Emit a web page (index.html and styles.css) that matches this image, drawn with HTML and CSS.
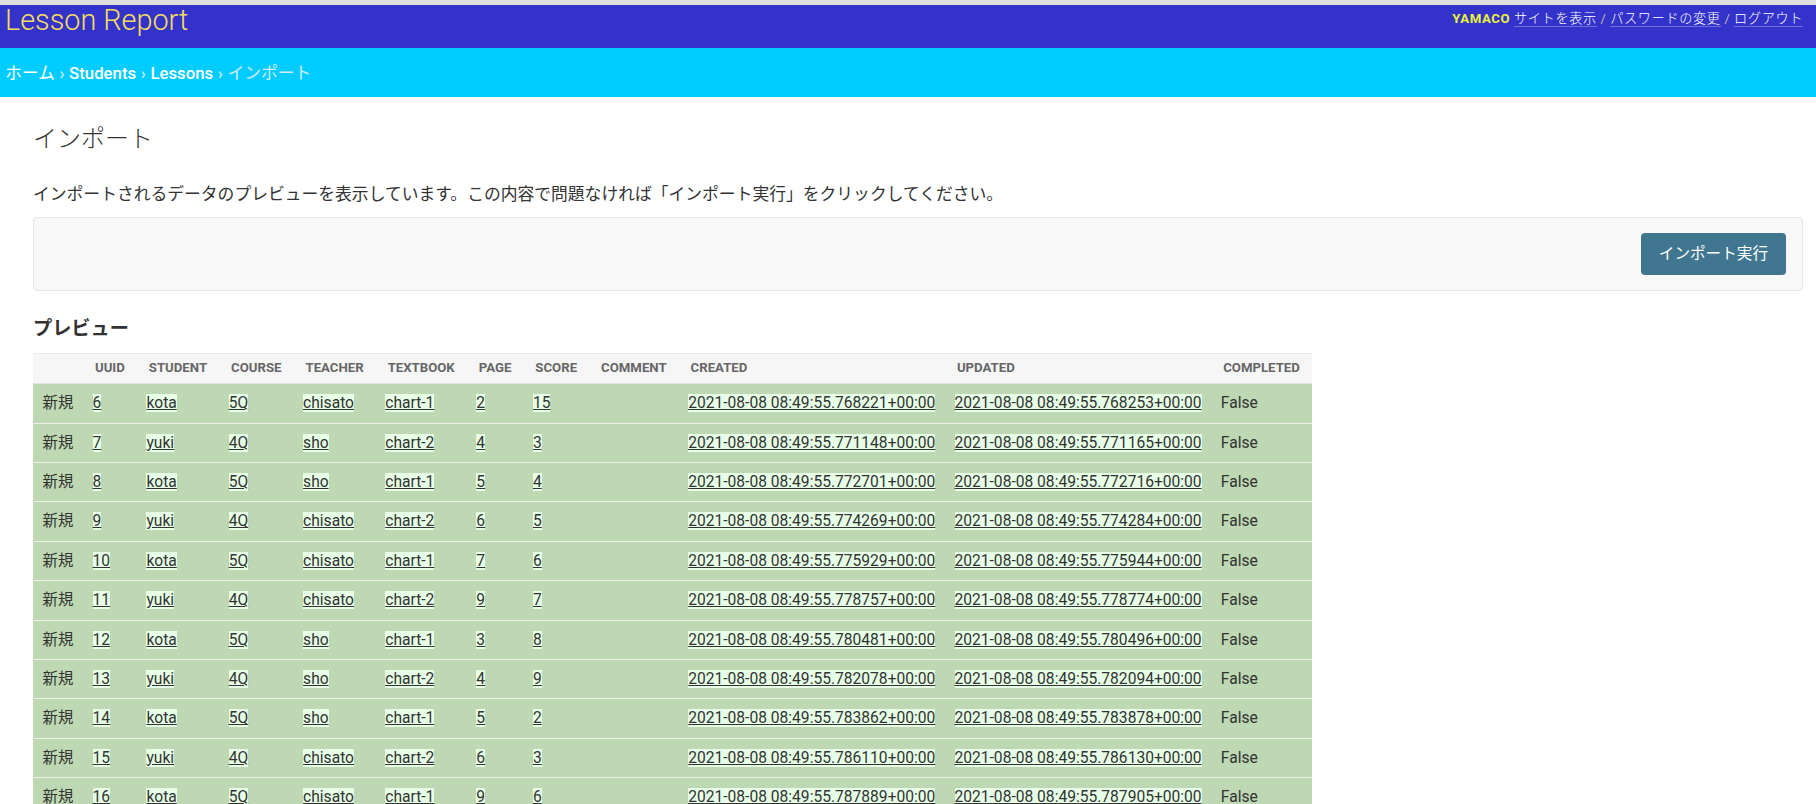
FILE: index.html
```html
<!DOCTYPE html>
<html lang="ja">
<head>
<meta charset="utf-8">
<title>インポート | Lesson Report</title>
<link rel="stylesheet" href="styles.css">
</head>
<body>
<header class="header">
  <div class="site-name">Lesson Report</div>
  <div class="user-tools">
    <strong class="user">YAMACO</strong>
    <a class="tool" href="#">サイトを表示</a> <span class="sep">/</span>
    <a class="tool" href="#">パスワードの変更</a> <span class="sep">/</span>
    <a class="tool" href="#">ログアウト</a>
  </div>
</header>
<nav class="breadcrumbs">
  <a class="crumb-home" href="#">ホーム</a><span class="crumb-sep">›</span><a class="crumb" href="#">Students</a><span class="crumb-sep">›</span><a class="crumb" href="#">Lessons</a><span class="crumb-sep">›</span><span class="crumb-current">インポート</span>
</nav>
<main class="content">
  <h1 class="title">インポート</h1>
  <p class="desc">インポートされるデータのプレビューを表示しています。この内容で問題なければ「インポート実行」をクリックしてください。</p>
  <div class="submit-row">
    <button class="btn" type="button">インポート実行</button>
  </div>
  <h2 class="subtitle">プレビュー</h2>
  <table class="preview">
    <thead>
      <tr>
        <th></th><th>UUID</th><th>Student</th><th>Course</th><th>Teacher</th><th>Textbook</th><th>Page</th><th>Score</th><th>Comment</th><th>Created</th><th>Updated</th><th>Completed</th>
      </tr>
    </thead>
    <tbody>
      <tr class="new"><td class="type">新規</td><td><ins>6</ins></td><td><ins>kota</ins></td><td><ins>5Q</ins></td><td><ins>chisato</ins></td><td><ins>chart-1</ins></td><td><ins>2</ins></td><td><ins>15</ins></td><td></td><td><ins>2021-08-08 08:49:55.768221+00:00</ins></td><td><ins>2021-08-08 08:49:55.768253+00:00</ins></td><td>False</td></tr>
      <tr class="new"><td class="type">新規</td><td><ins>7</ins></td><td><ins>yuki</ins></td><td><ins>4Q</ins></td><td><ins>sho</ins></td><td><ins>chart-2</ins></td><td><ins>4</ins></td><td><ins>3</ins></td><td></td><td><ins>2021-08-08 08:49:55.771148+00:00</ins></td><td><ins>2021-08-08 08:49:55.771165+00:00</ins></td><td>False</td></tr>
      <tr class="new"><td class="type">新規</td><td><ins>8</ins></td><td><ins>kota</ins></td><td><ins>5Q</ins></td><td><ins>sho</ins></td><td><ins>chart-1</ins></td><td><ins>5</ins></td><td><ins>4</ins></td><td></td><td><ins>2021-08-08 08:49:55.772701+00:00</ins></td><td><ins>2021-08-08 08:49:55.772716+00:00</ins></td><td>False</td></tr>
      <tr class="new"><td class="type">新規</td><td><ins>9</ins></td><td><ins>yuki</ins></td><td><ins>4Q</ins></td><td><ins>chisato</ins></td><td><ins>chart-2</ins></td><td><ins>6</ins></td><td><ins>5</ins></td><td></td><td><ins>2021-08-08 08:49:55.774269+00:00</ins></td><td><ins>2021-08-08 08:49:55.774284+00:00</ins></td><td>False</td></tr>
      <tr class="new"><td class="type">新規</td><td><ins>10</ins></td><td><ins>kota</ins></td><td><ins>5Q</ins></td><td><ins>chisato</ins></td><td><ins>chart-1</ins></td><td><ins>7</ins></td><td><ins>6</ins></td><td></td><td><ins>2021-08-08 08:49:55.775929+00:00</ins></td><td><ins>2021-08-08 08:49:55.775944+00:00</ins></td><td>False</td></tr>
      <tr class="new"><td class="type">新規</td><td><ins>11</ins></td><td><ins>yuki</ins></td><td><ins>4Q</ins></td><td><ins>chisato</ins></td><td><ins>chart-2</ins></td><td><ins>9</ins></td><td><ins>7</ins></td><td></td><td><ins>2021-08-08 08:49:55.778757+00:00</ins></td><td><ins>2021-08-08 08:49:55.778774+00:00</ins></td><td>False</td></tr>
      <tr class="new"><td class="type">新規</td><td><ins>12</ins></td><td><ins>kota</ins></td><td><ins>5Q</ins></td><td><ins>sho</ins></td><td><ins>chart-1</ins></td><td><ins>3</ins></td><td><ins>8</ins></td><td></td><td><ins>2021-08-08 08:49:55.780481+00:00</ins></td><td><ins>2021-08-08 08:49:55.780496+00:00</ins></td><td>False</td></tr>
      <tr class="new"><td class="type">新規</td><td><ins>13</ins></td><td><ins>yuki</ins></td><td><ins>4Q</ins></td><td><ins>sho</ins></td><td><ins>chart-2</ins></td><td><ins>4</ins></td><td><ins>9</ins></td><td></td><td><ins>2021-08-08 08:49:55.782078+00:00</ins></td><td><ins>2021-08-08 08:49:55.782094+00:00</ins></td><td>False</td></tr>
      <tr class="new"><td class="type">新規</td><td><ins>14</ins></td><td><ins>kota</ins></td><td><ins>5Q</ins></td><td><ins>sho</ins></td><td><ins>chart-1</ins></td><td><ins>5</ins></td><td><ins>2</ins></td><td></td><td><ins>2021-08-08 08:49:55.783862+00:00</ins></td><td><ins>2021-08-08 08:49:55.783878+00:00</ins></td><td>False</td></tr>
      <tr class="new"><td class="type">新規</td><td><ins>15</ins></td><td><ins>yuki</ins></td><td><ins>4Q</ins></td><td><ins>chisato</ins></td><td><ins>chart-2</ins></td><td><ins>6</ins></td><td><ins>3</ins></td><td></td><td><ins>2021-08-08 08:49:55.786110+00:00</ins></td><td><ins>2021-08-08 08:49:55.786130+00:00</ins></td><td>False</td></tr>
      <tr class="new"><td class="type">新規</td><td><ins>16</ins></td><td><ins>kota</ins></td><td><ins>5Q</ins></td><td><ins>chisato</ins></td><td><ins>chart-1</ins></td><td><ins>9</ins></td><td><ins>6</ins></td><td></td><td><ins>2021-08-08 08:49:55.787889+00:00</ins></td><td><ins>2021-08-08 08:49:55.787905+00:00</ins></td><td>False</td></tr>
    </tbody>
  </table>
</main>
</body>
</html>
```
FILE: styles.css
```css
html, body {
  margin: 0;
  padding: 0;
}
body {
  font-family: Roboto, "Noto Sans CJK JP", "Liberation Sans", sans-serif;
  color: #333;
  background: #fff;
  overflow: hidden;
}

/* header */
.header {
  box-sizing: border-box;
  border-top: 5px solid #dedede;
  height: 48px;
  background: #3333cc;
  display: flex;
  justify-content: space-between;
  align-items: flex-start;
  padding: 0 13px 0 5px;
}
.site-name {
  font-size: 28.8px;
  font-weight: 300;
  line-height: 30px;
  color: #f5dd5d;
}
.user-tools {
  margin-top: 5px;
  font-size: 13.2px;
  line-height: 17px;
  letter-spacing: 0.6px;
  color: #f0f07a;
  font-weight: 300;
}
.user {
  font-weight: 700;
  color: #e9f23a;
}
.tool {
  color: #fff;
  text-decoration: none;
  border-bottom: 1px solid rgba(255, 255, 255, 0.3);
}
.sep {
  color: #e8e890;
}

/* breadcrumbs */
.breadcrumbs {
  height: 49px;
  background: #00ccff;
  display: flex;
  align-items: center;
  padding: 0 5px;
  font-size: 16.8px;
  line-height: 20px;
  color: #d6eef8;
}
.crumb-home {
  color: #fff;
  text-decoration: none;
}
.crumb {
  color: #fff;
  font-weight: 500;
  text-decoration: none;
}
.crumb-sep {
  color: #e2f4fb;
  padding: 0 4.6px;
}
.crumb-current {
  color: #d2ecf6;
}

/* content */
.content {
  padding: 0 13px 0 33px;
}
.title {
  margin: 26.5px 0 0;
  font-size: 24px;
  font-weight: 300;
  line-height: 30px;
  color: #333;
}
.desc {
  margin: 30px 0 0;
  font-size: 16.8px;
  line-height: 20px;
  color: #333;
}
.submit-row {
  margin-top: 13.5px;
  box-sizing: border-box;
  height: 74px;
  background: #f8f8f8;
  border: 1px solid #e6e6e6;
  border-radius: 4px;
  display: flex;
  justify-content: flex-end;
  align-items: center;
  padding: 0 16px;
}
.btn {
  height: 42px;
  padding: 0 18px;
  background: #417690;
  color: #fff;
  border: none;
  border-radius: 4px;
  font-family: Roboto, "Noto Sans CJK JP", sans-serif;
  font-size: 15.6px;
  line-height: 20px;
}
.subtitle {
  margin: 26.3px 0 0;
  font-size: 19.2px;
  line-height: 24px;
  font-weight: 700;
  color: #333;
}

/* table */
.preview {
  margin-top: 12px;
  border-collapse: collapse;
}
.preview th {
  background: #f6f6f6;
  color: #666;
  font-size: 13.2px;
  font-weight: 700;
  text-transform: uppercase;
  text-align: left;
  line-height: 16px;
  padding: 6px 12px 7px 12px;
  border-top: 1px solid #e8e8e8;
  border-bottom: 1px solid #e2e2e2;
  white-space: nowrap;
}
.preview td {
  font-size: 15.6px;
  line-height: 19px;
  padding: 10px 9.6px 9.4px;
  border-bottom: 1px solid #eeeeee;
  white-space: nowrap;
  color: #333;
}
.preview tr.new {
  background: #bdd8b2;
}
.preview td.type {
  font-size: 15.4px;
}
.preview ins {
  background: #e6ffe6;
  text-decoration: underline;
  color: #333;
}
```
